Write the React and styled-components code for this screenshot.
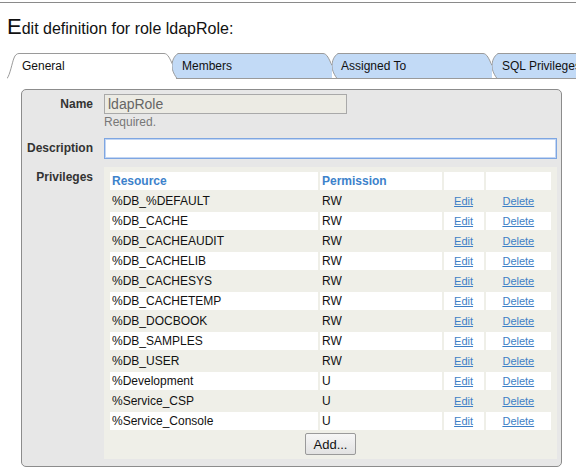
import React from "react";
import styled, { createGlobalStyle } from "styled-components";

const GlobalStyle = createGlobalStyle`
  body {
    margin: 0;
    background: #fff;
    font-family: "Liberation Sans", Arial, sans-serif;
    overflow: hidden;
  }
`;

const Page = styled.div`
  width: 576px;
  height: 468px;
  overflow: hidden;
`;

const TopRule = styled.div`
  height: 1px;
  margin-top: 2px;
  background: #8a8a8a;
`;

const Title = styled.h1`
  margin: 0;
  padding-left: 7px;
  height: 50px;
  line-height: 47px;
  font-size: 16px;
  font-weight: normal;
  color: #111;
  white-space: nowrap;
  span {
    font-size: 22px;
  }
`;

const TabRow = styled.div`
  display: flex;
  height: 26px;
  padding-left: 7px;
  white-space: nowrap;
`;

const Tab = styled.div`
  position: relative;
  flex: none;
  width: ${(p) => p.$width}px;
  margin-left: ${(p) => p.$overlap || 0}px;
  padding-left: ${(p) => p.$pad}px;
  box-sizing: border-box;
  line-height: 26px;
  font-size: 12px;
  color: #111;
  svg {
    position: absolute;
    left: 0;
    top: 0;
  }
  label {
    position: relative;
  }
`;

function TabShape({ width, active }) {
  const W = width;
  const left = active
    ? "M0,25.5 C3,22 5,10 7,5 C8,2 10,0.5 12,0.5"
    : "M5,25.5 C1,20 0,16 0,12.5 C0,8 2,3 6,0.5";
  const top = `L${W - 14},0.5 C${W - 10},0.5 ${W - 8},6 ${W - 5},12.5`;
  const fill = `${left} ${top} L${W - 5},25.5 Z`;
  return (
    <svg width={W} height={27} viewBox={`0 0 ${W} 27`}>
      <path d={fill} fill={active ? "#fff" : "#c2daf6"} />
      <path d={`${left} ${top}`} fill="none" stroke="#9a9a9a" />
      {!active && <path d={`M4,25.5 L${W},25.5`} stroke="#9a9a9a" />}
    </svg>
  );
}

const tabs = [
  { label: "General", width: 171, pad: 15, active: true },
  { label: "Members", width: 165, pad: 10, overlap: -6 },
  { label: "Assigned To", width: 165, pad: 9, overlap: -5 },
  { label: "SQL Privileges", width: 165, pad: 10, overlap: -5 },
];

const Panel = styled.div`
  margin: 10px 0 0 21px;
  width: 541px;
  height: 378px;
  box-sizing: border-box;
  border: 1px solid #8c8c8c;
  border-radius: 5px;
  background: #e7e7e7;
  padding: 4px 4px 0 0;
  display: grid;
  grid-template-columns: 71px 1fr;
  column-gap: 11px;
  align-content: start;
`;

const Label = styled.div`
  font-size: 12px;
  font-weight: bold;
  color: #333;
  text-align: right;
  line-height: 20px;
  padding-top: ${(p) => p.$top || 0}px;
`;

const Field = styled.div`
  padding-top: ${(p) => p.$top || 0}px;
`;

const TextInput = styled.input`
  display: block;
  box-sizing: border-box;
  width: ${(p) => p.$width || "100%"};
  height: ${(p) => (p.$focus ? 21 : 20)}px;
  margin: 0;
  padding: 0 3px;
  font-family: "Liberation Sans", Arial, sans-serif;
  font-size: 14px;
  color: #666;
  background: ${(p) => (p.$disabled ? "#ecebe4" : "#fff")};
  border: 1px solid ${(p) => (p.$focus ? "#7ea6e2" : "#a9a9a9")};
  box-shadow: ${(p) => (p.$focus ? "inset 0 0 0 1px #c3d6f3" : "none")};
  outline: none;
`;

const Hint = styled.div`
  font-size: 12px;
  color: #777;
  line-height: 14px;
  margin-top: 1px;
`;

const TableBox = styled.div`
  background: #efefe8;
  padding: 3px 4px 4px;
  width: 453px;
  box-sizing: border-box;
`;

const Table = styled.table`
  border-spacing: 2px;
  width: 445px;
  table-layout: fixed;
  font-size: 12px;
`;

const HeadCell = styled.th`
  text-align: left;
  background: #fff;
  color: #3d82cb;
  font-weight: bold;
  height: 18px;
  padding: 0 2px;
`;

const Row = styled.tr`
  background: ${(p) => (p.$odd ? "#efefe8" : "#fff")};
`;

const Cell = styled.td`
  height: 18px;
  padding: 0 2px;
  color: #111;
  text-align: ${(p) => (p.$center ? "center" : "left")};
  white-space: nowrap;
`;

const Link = styled.a`
  color: #3d7fc6;
  font-size: 11px;
  text-decoration: underline;
  cursor: pointer;
`;

const ButtonRow = styled.div`
  display: flex;
  justify-content: center;
  padding-top: 1px;
`;

const Button = styled.button`
  height: 22px;
  width: 51px;
  padding: 0;
  font-family: "Liberation Sans", Arial, sans-serif;
  font-size: 13px;
  color: #111;
  background: linear-gradient(#f6f6f6, #e2e2e2);
  border: 1px solid #9a9a9a;
  border-radius: 2px;
`;

const privileges = [
  ["%DB_%DEFAULT", "RW"],
  ["%DB_CACHE", "RW"],
  ["%DB_CACHEAUDIT", "RW"],
  ["%DB_CACHELIB", "RW"],
  ["%DB_CACHESYS", "RW"],
  ["%DB_CACHETEMP", "RW"],
  ["%DB_DOCBOOK", "RW"],
  ["%DB_SAMPLES", "RW"],
  ["%DB_USER", "RW"],
  ["%Development", "U"],
  ["%Service_CSP", "U"],
  ["%Service_Console", "U"],
];

export default function App() {
  return (
    <Page>
      <GlobalStyle />
      <TopRule />
      <Title>
        <span>E</span>dit definition for role ldapRole:
      </Title>
      <TabRow>
        {tabs.map((t) => (
          <Tab key={t.label} $width={t.width} $pad={t.pad} $overlap={t.overlap}>
            <TabShape width={t.width} active={t.active} />
            <label>{t.label}</label>
          </Tab>
        ))}
      </TabRow>
      <Panel>
        <Label>Name</Label>
        <Field>
          <TextInput $width="243px" $disabled defaultValue="ldapRole" readOnly />
          <Hint>Required.</Hint>
        </Field>
        <Label $top={9}>Description</Label>
        <Field $top={9}>
          <TextInput $focus />
        </Field>
        <Label $top={8}>Privileges</Label>
        <Field $top={8}>
          <TableBox>
            <Table>
              <colgroup>
                <col style={{ width: 207 }} />
                <col style={{ width: 121 }} />
                <col style={{ width: 40 }} />
                <col style={{ width: 65 }} />
              </colgroup>
              <thead>
                <tr>
                  <HeadCell>Resource</HeadCell>
                  <HeadCell>Permission</HeadCell>
                  <HeadCell />
                  <HeadCell />
                </tr>
              </thead>
              <tbody>
                {privileges.map(([res, perm], i) => (
                  <Row key={res} $odd={i % 2 === 0}>
                    <Cell>{res}</Cell>
                    <Cell>{perm}</Cell>
                    <Cell $center>
                      <Link>Edit</Link>
                    </Cell>
                    <Cell $center>
                      <Link>Delete</Link>
                    </Cell>
                  </Row>
                ))}
              </tbody>
            </Table>
            <ButtonRow>
              <Button>Add...</Button>
            </ButtonRow>
          </TableBox>
        </Field>
      </Panel>
    </Page>
  );
}
